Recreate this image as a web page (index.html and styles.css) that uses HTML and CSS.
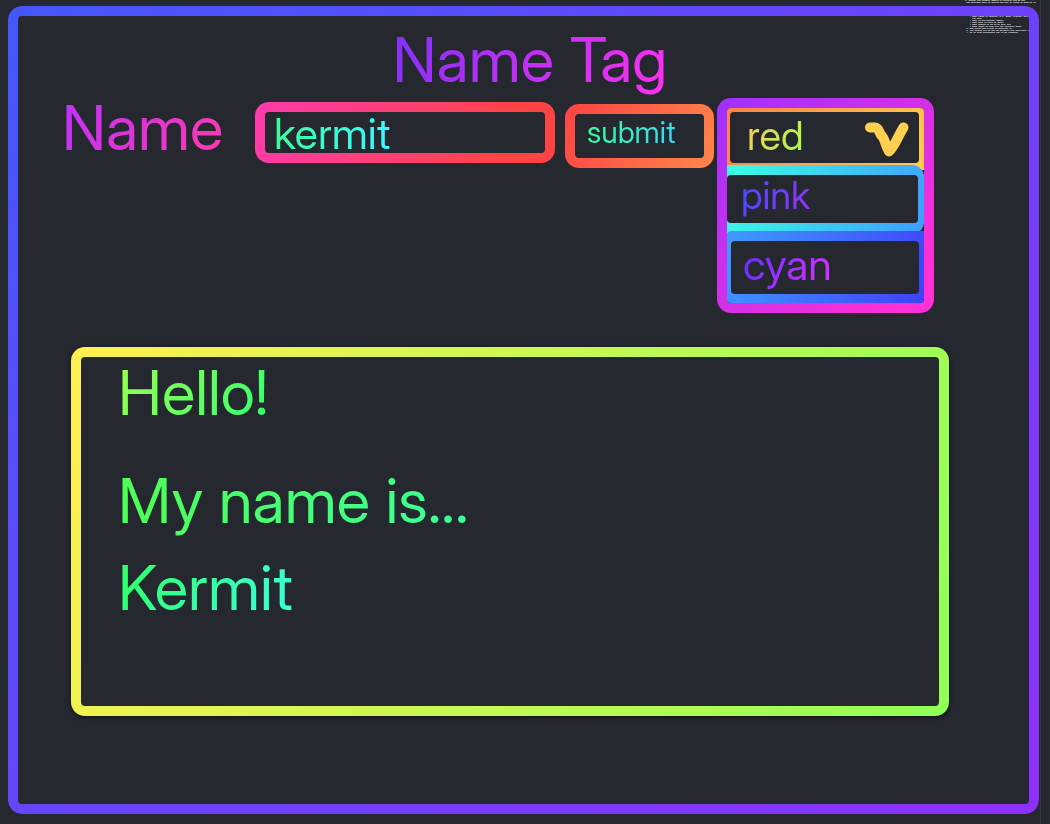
FILE: index.html
```html
<!DOCTYPE html>
<html lang="en">
<head>
<meta charset="utf-8">
<title>Name Tag</title>
<link rel="stylesheet" href="styles.css">
</head>
<body>
<div class="page">
  <pre class="notes" aria-hidden="true">1. Choose one feature aspect of project you do now
 and describe what is stored and how it would be used by it






    * What kinds of objects (i.e. dogs, Friends, Menus, etc)
      can use?
    * What is the purpose again?
    * What does it need to have?
    * What should it do to be able to?
    * What types of data are the features good?
 2. Use words and arrows to describe it
 3. You should try to use my defaults and functions (i.e.)
 4. It is also acceptable use of my elements</pre>
  <main class="frame">
    <h1 class="title"><span class="ink ink-title">Name Tag</span></h1>
    <form class="controls" onsubmit="return false">
      <label class="name-label" for="name"><span class="ink ink-name">Name</span></label>
      <div class="field"><input class="name-input" id="name" type="text" value="kermit"></div>
      <button class="submit" type="submit"><span class="ink ink-submit">submit</span></button>
      <div class="picker" role="listbox" aria-label="Color">
        <button class="option option-red" type="button" role="option" aria-selected="true">
          <span class="face">
            <span class="ink ink-red">red</span>
            <svg class="chevron" viewBox="0 0 46 36" aria-hidden="true"><path d="M6 5.500H11C15 6 15 10 17 13C21 16 21 23 25 29.500C30 26 34 14 39.500 5.500"/></svg>
          </span>
        </button>
        <button class="option option-pink" type="button" role="option" aria-selected="false"><span class="face"><span class="ink ink-pink">pink</span></span></button>
        <button class="option option-cyan" type="button" role="option" aria-selected="false"><span class="face"><span class="ink ink-cyan">cyan</span></span></button>
      </div>
    </form>
    <section class="tag">
      <p class="line"><span class="ink ink-hello">Hello!</span></p>
      <p class="line line-intro"><span class="ink ink-intro">My name is...</span></p>
      <p class="line"><span class="ink ink-kermit">Kermit</span></p>
    </section>
  </main>
</div>
</body>
</html>
```
FILE: styles.css
```css
:root {
  --bg: #25282f;
}

* {
  box-sizing: border-box;
}

body {
  margin: 0;
  background: var(--bg);
  font-family: "Inter Display", Inter, "Liberation Sans", sans-serif;
  font-variation-settings: "opsz" 32;
}

button,
input {
  margin: 0;
  padding: 0;
  border: 0;
  font: inherit;
  font-variation-settings: inherit;
  text-align: left;
}

.page {
  position: relative;
  display: flex;
  min-height: 100vh;
  margin-right: 9px;
  padding: 6px 1px 10px 8px;
  border-right: 1px solid #373a41;
}

.notes {
  position: absolute;
  top: 0;
  right: 8px;
  width: 67px;
  margin: 0;
  color: #fff;
  font: bold 2px/2px "Liberation Mono", monospace;
}

/* Gradient outline around a solid panel */
.field,
.submit,
.picker,
.tag {
  border: 10px solid transparent;
  border-radius: 14px;
  background:
    linear-gradient(var(--bg), var(--bg)) padding-box,
    var(--outline) border-box;
}

.frame {
  position: relative;
  flex: 1;
  display: flex;
  flex-direction: column;
  padding: 24px 90px 98px 63px;
}

/* Ring only, so the notes stay visible inside the frame */
.frame::before {
  content: "";
  position: absolute;
  inset: 0;
  border: 10px solid transparent;
  border-radius: 14px;
  background: linear-gradient(135deg, #4457fa, #8f30fa) border-box;
  mask: linear-gradient(#000, #000) padding-box exclude, linear-gradient(#000, #000) border-box;
  pointer-events: none;
}

/* Gradient lettering */
.ink {
  background-image: linear-gradient(120deg, var(--from), var(--to));
  -webkit-background-clip: text;
  background-clip: text;
  color: transparent;
}

.ink-title { --from: #8030fa; --to: #ff30f0; }
.ink-name { --from: #c030ff; --to: #ff3aae; }
.ink-submit { --from: #3aff90; --to: #3ad4ff; }
.ink-red { --from: #ffc850; --to: #a0ff50; }
.ink-pink { --from: #3a50ff; --to: #9a30f8; }
.ink-cyan { --from: #5a30ff; --to: #e030ff; }
.ink-hello { --from: #9cff50; --to: #30ff70; }
.ink-intro { --from: #50ff50; --to: #3aff9c; }
.ink-kermit { --from: #30ff60; --to: #3affe0; }

.title,
.name-label,
.line {
  margin: 0;
  font-size: 62px;
  font-weight: 400;
  line-height: 60px;
}

.title {
  margin-bottom: 8px;
  padding-left: 40px;
  text-align: center;
}

.controls {
  display: grid;
  grid-template-columns: 193px minmax(160px, 1fr) 152px 217px;
  align-items: start;
  margin-left: -9px;
  padding-right: 15px;
}

.field {
  --outline: linear-gradient(110deg, #ff3aae, #ff4444 85%);
  display: flex;
  margin: 4px 10px 0 0;
}

.name-input {
  width: 100%;
  height: 41px;
  padding-left: 9px;
  outline: 0;
  background: linear-gradient(100deg, #3aff90, #3af8ff 120px);
  -webkit-background-clip: text;
  background-clip: text;
  color: transparent;
  font-size: 43px;
}

.submit {
  --outline: linear-gradient(115deg, #ff4444, #ff854a);
  height: 64px;
  margin: 6px 3px 0 0;
  padding: 0 0 8px 12px;
  font-size: 30px;
  line-height: 34px;
}

.picker {
  --outline: linear-gradient(135deg, #a030ff, #ff30d4 90%);
  display: flex;
  flex-direction: column;
}

.option {
  display: flex;
  border-radius: 4px;
  background: var(--outline);
}

.face {
  flex: 1;
  display: flex;
  align-items: center;
  justify-content: space-between;
  border-radius: 4px;
  background: var(--bg);
}

.option-red {
  --outline: linear-gradient(110deg, #ff8048, #ffcc50);
  height: 62px;
  padding: 4px 5px 7px 3px;
  border-radius: 4px 4px 0 0;
  font-size: 40px;
}

.option-red .face {
  padding: 0 9px 5px 17px;
}

.option-pink {
  --outline: linear-gradient(110deg, #3affe4, #3f9cff);
  height: 69px;
  margin-top: -5px;
  padding: 10px 6px 11px 0;
  border-radius: 0 12px 12px 0;
  font-size: 38px;
}

.option-pink .face {
  padding: 0 0 9px 14px;
}

.option-cyan {
  --outline: linear-gradient(110deg, #3f9cff, #4040fa);
  height: 72px;
  margin-top: -3px;
  padding: 10px 5px 9px 4px;
  border-radius: 4px 0 4px 4px;
  font-size: 43px;
}

.option-cyan .face {
  padding: 0 0 7px 12px;
}

.chevron {
  width: 46px;
  height: 36px;
  margin-top: 10px;
  fill: none;
  stroke: #ffd050;
  stroke-width: 10;
  stroke-linecap: round;
  stroke-linejoin: round;
}

.tag {
  --outline: linear-gradient(110deg, #fff050, #90ff55);
  flex: 1;
  margin-top: 34px;
  padding-left: 37px;
  box-shadow: 0 1px 4px #000a;
}

.line {
  line-height: 72px;
}

.line-intro {
  margin: 36px 0 15px;
}
```
